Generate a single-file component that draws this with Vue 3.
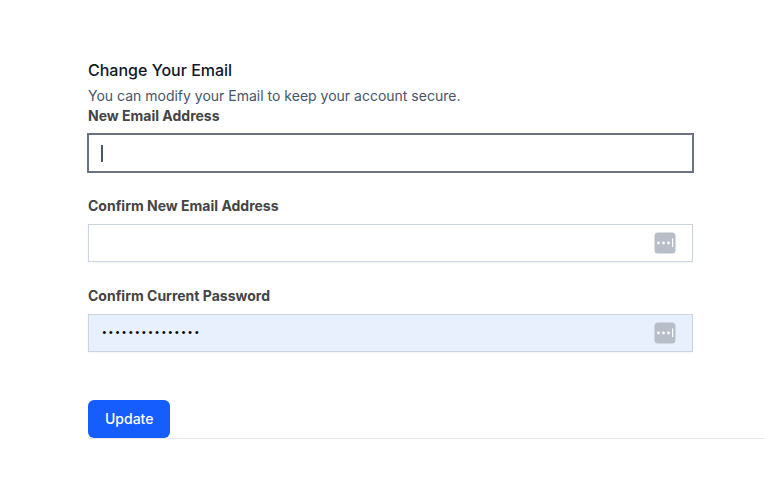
<script setup>
import { ref } from 'vue'

const email = ref('')
const confirmEmail = ref('')
const password = ref('correcthorse123')
</script>

<template>
  <main class="page">
    <form class="form" @submit.prevent>
      <header class="intro">
        <h1 class="title">Change Your Email</h1>
        <p class="description">You can modify your Email to keep your account secure.</p>
      </header>
      <div class="fields">
        <div class="field">
          <label for="email">New Email Address</label>
          <div class="control">
            <input id="email" v-model="email" class="active" type="email" />
            <span v-if="!email" class="caret" aria-hidden="true"></span>
          </div>
        </div>
        <div class="field">
          <label for="confirm-email">Confirm New Email Address</label>
          <div class="control">
            <input id="confirm-email" v-model="confirmEmail" type="email" />
            <svg class="badge" viewBox="0 0 22 22" aria-hidden="true">
              <rect x="0.5" y="0.5" width="21" height="21" rx="3.5" fill="#b7bec8" />
              <g fill="#fff">
                <circle cx="4.5" cy="11" r="1.4" />
                <circle cx="9.5" cy="11" r="1.4" />
                <circle cx="14.5" cy="11" r="1.4" />
                <rect x="18" y="6.5" width="1.2" height="8.5" />
              </g>
            </svg>
          </div>
        </div>
        <div class="field">
          <label for="password">Confirm Current Password</label>
          <div class="control">
            <input id="password" v-model="password" class="filled" type="password" />
            <svg class="badge" viewBox="0 0 22 22" aria-hidden="true">
              <rect x="0.5" y="0.5" width="21" height="21" rx="3.5" fill="#b7bec8" />
              <g fill="#fff">
                <circle cx="4.5" cy="11" r="1.4" />
                <circle cx="9.5" cy="11" r="1.4" />
                <circle cx="14.5" cy="11" r="1.4" />
                <rect x="18" y="6.5" width="1.2" height="8.5" />
              </g>
            </svg>
          </div>
        </div>
      </div>
      <div class="actions">
        <button type="submit">Update</button>
      </div>
    </form>
  </main>
</template>

<style>
body {
  background: #fff;
}
</style>

<style scoped>
.page {
  padding: 58px 0 40px 88px;
  font-family: Inter, "Liberation Sans", sans-serif;
  font-size: 14px;
  line-height: 20px;
}

.title {
  margin: 0 0 4px;
  color: #0f172a;
  font-size: 16px;
  font-weight: 500;
  line-height: 24px;
}

.description {
  margin: 0;
  color: #475569;
}

.fields {
  display: grid;
  gap: 24px;
  margin-right: 71px;
}

label {
  display: block;
  margin-bottom: 8px;
  color: #444;
  font-weight: 700;
}

.control {
  position: relative;
}

input {
  display: block;
  box-sizing: border-box;
  width: 100%;
  height: 38px;
  padding: 8px 12px;
  border: 1px solid #cbd5e1;
  border-radius: 0;
  outline: none;
  background: #fff;
  box-shadow: 0 1px 2px rgba(0, 0, 0, 0.05);
  color: #475569;
  font: inherit;
}

input.active {
  border-color: #6b7280;
  box-shadow: 0 0 0 1px #6b7280;
}

input.filled {
  background: #e8f0fe;
  color: #000;
  font-family: "Liberation Mono", monospace;
  font-size: 11px;
}

.caret {
  position: absolute;
  top: 11px;
  left: 13px;
  width: 2px;
  height: 17px;
  background: #475569;
  pointer-events: none;
}

.badge {
  position: absolute;
  top: 8px;
  right: 17px;
  width: 22px;
  height: 22px;
}

.actions {
  padding-top: 48px;
  border-bottom: 1px solid #e5e7eb;
}

button {
  display: block;
  height: 38px;
  padding: 8px 16px;
  border: 1px solid transparent;
  border-radius: 6px;
  background: #155dfc;
  color: #fff;
  font: inherit;
  font-weight: 500;
  cursor: pointer;
}
</style>
